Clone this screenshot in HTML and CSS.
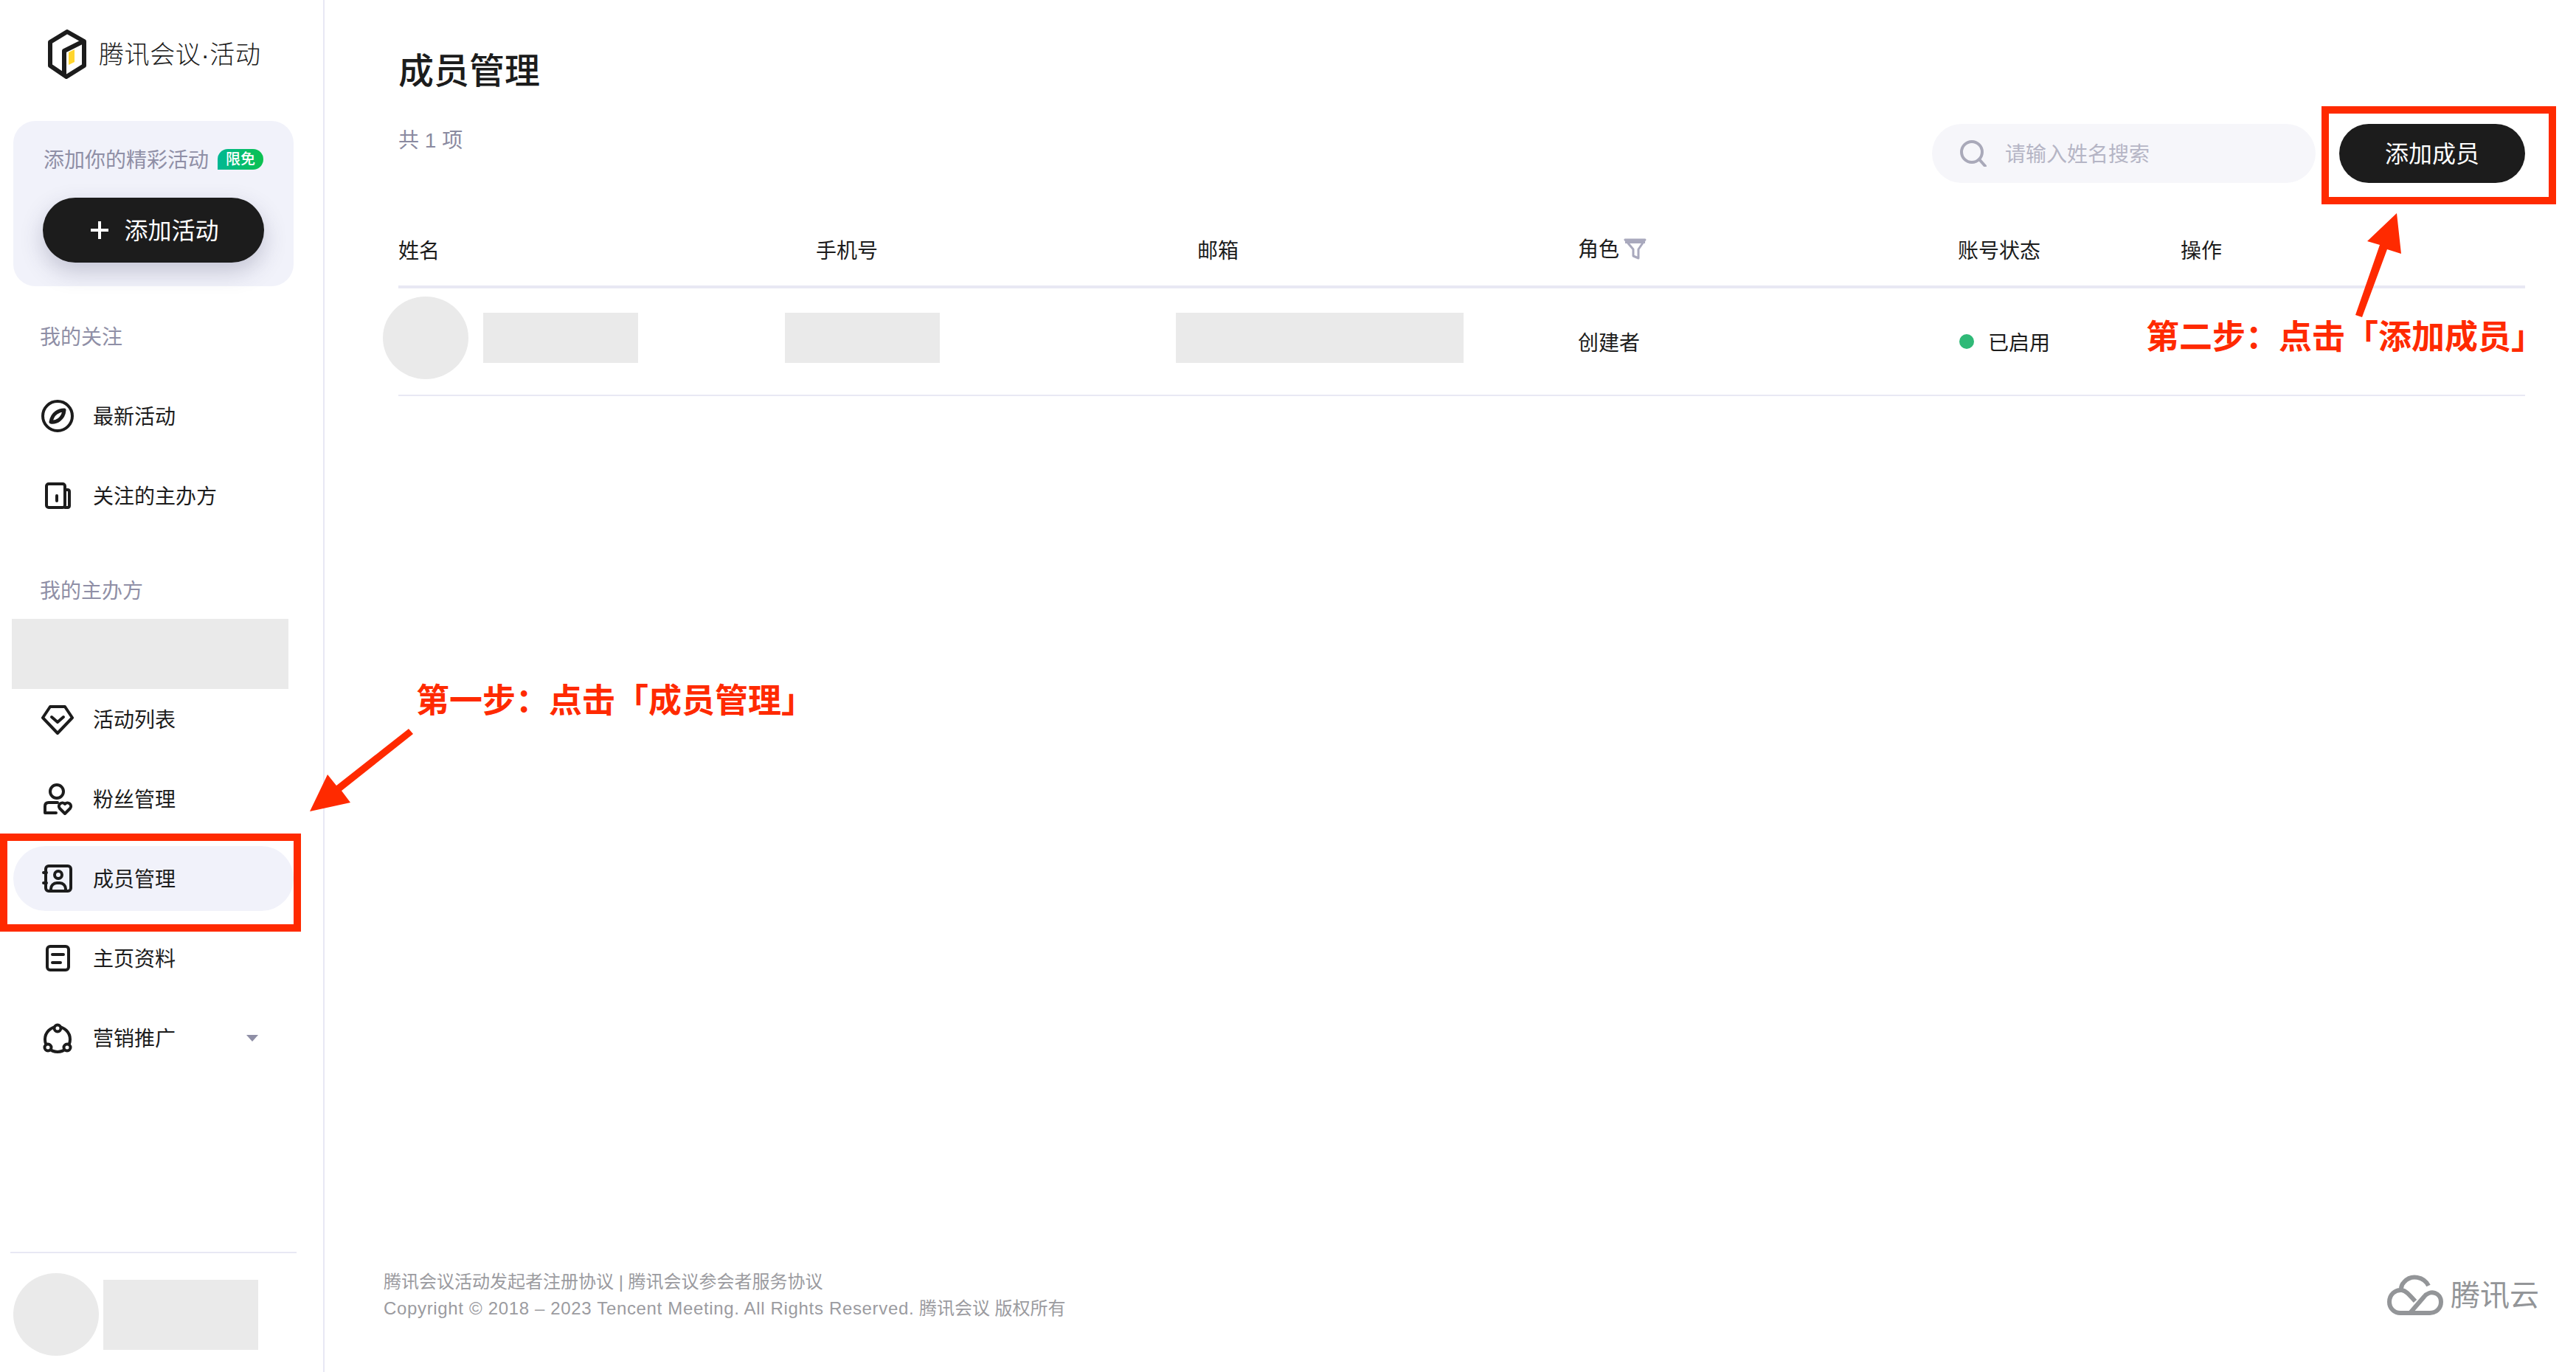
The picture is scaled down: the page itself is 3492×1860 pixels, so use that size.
FILE: index.html
```html
<!DOCTYPE html>
<html lang="zh-CN">
<head>
    <meta charset="UTF-8">
    <meta name="viewport" content="width=device-width, initial-scale=1.0">
    <title>成员管理</title>
    <link rel="stylesheet" href="styles.css">
</head>
<body>
    <div class="page">
        <aside class="sidebar">
            <div class="brand">
                <svg class="brand-logo" viewBox="0 0 52 68">
                    <path d="M26 3 L49 16 V49 L25 64 L3 49 V17 Z" fill="none" stroke="#1c1c1c" stroke-width="6" stroke-linejoin="round"/>
                    <path d="M48 16 L22 29 V61" fill="none" stroke="#1c1c1c" stroke-width="6" stroke-linejoin="round"/>
                    <path d="M28 31 L36 27 V44 L28 48 Z" fill="#ffd52e"/>
                </svg>
                <span class="brand-name">腾讯会议·活动</span>
            </div>

            <div class="promo-card">
                <div class="promo-title">
                    <span class="promo-text">添加你的精彩活动</span>
                    <span class="promo-badge">限免</span>
                </div>
                <button class="promo-button">
                    <svg class="plus-icon" viewBox="0 0 24 24">
                        <path d="M12 0 V24 M0 12 H24" stroke="#fff" stroke-width="4"/>
                    </svg>
                    <span>添加活动</span>
                </button>
            </div>

            <div class="nav-label nav-label-first">我的关注</div>
            <nav class="nav-list nav-list-first">
                <a class="nav-item">
                    <svg class="nav-icon" viewBox="0 0 44 44">
                        <circle cx="22" cy="22" r="20"/>
                        <path class="leaf" d="M31 14 C24 14 15 18 13 30 C20 31 30 26 31 14 Z"/>
                    </svg>
                    <span>最新活动</span>
                </a>
                <a class="nav-item">
                    <svg class="nav-icon" viewBox="0 0 44 44">
                        <rect x="7" y="6" width="25" height="32" rx="3"/>
                        <path d="M32 14 H36 A2.5 2.5 0 0 1 38 16.5 V35.5 A2.5 2.5 0 0 1 36 38 H32"/>
                        <path d="M21 22 V29"/>
                    </svg>
                    <span>关注的主办方</span>
                </a>
            </nav>

            <div class="nav-label nav-label-second">我的主办方</div>
            <div class="placeholder host-placeholder"></div>
            <nav class="nav-list nav-list-second">
                <a class="nav-item">
                    <svg class="nav-icon" viewBox="0 0 44 44">
                        <path d="M12 5 H32 L42 20 L22 41 L2 20 Z"/>
                        <path d="M14 19 L22 26 L30 19"/>
                    </svg>
                    <span>活动列表</span>
                </a>
                <a class="nav-item">
                    <svg class="nav-icon" viewBox="0 0 44 44">
                        <circle cx="21" cy="12" r="9"/>
                        <path d="M22 27 H10 Q5 27 5 32 V41 H20"/>
                        <path d="M32 42 L25 35 A4.6 4.6 0 0 1 32 29 A4.6 4.6 0 0 1 39 35 Z"/>
                    </svg>
                    <span>粉丝管理</span>
                </a>
                <a class="nav-item active">
                    <svg class="nav-icon" viewBox="0 0 44 44">
                        <rect x="6" y="5" width="34" height="34" rx="4"/>
                        <circle cx="23" cy="17" r="5"/>
                        <path d="M13 38 V36 A8 8 0 0 1 21 28 H25 A8 8 0 0 1 33 36 V38"/>
                        <path d="M3 14 H7 M3 28 H7"/>
                    </svg>
                    <span>成员管理</span>
                </a>
                <a class="nav-item">
                    <svg class="nav-icon" viewBox="0 0 44 44">
                        <rect x="8" y="6" width="29" height="32" rx="4"/>
                        <path d="M15 17 H30 M15 28 H26"/>
                    </svg>
                    <span>主页资料</span>
                </a>
                <a class="nav-item">
                    <svg class="nav-icon" viewBox="0 0 44 44">
                        <circle cx="22" cy="24" r="17"/>
                        <circle class="node" cx="22" cy="9" r="4.5"/>
                        <circle class="node" cx="9" cy="35" r="4.5"/>
                        <circle class="node" cx="35" cy="35" r="4.5"/>
                    </svg>
                    <span>营销推广</span>
                    <i class="nav-caret"></i>
                </a>
            </nav>

            <div class="user-box">
                <div class="placeholder avatar"></div>
                <div class="placeholder user-name"></div>
            </div>
        </aside>

        <main class="main">
            <h1 class="page-title">成员管理</h1>

            <div class="toolbar">
                <span class="total">共 1 项</span>
                <div class="toolbar-actions">
                    <div class="search-box">
                        <svg class="search-icon" viewBox="0 0 36 36">
                            <circle cx="16" cy="16" r="14" fill="none" stroke="#a9a9b9" stroke-width="4"/>
                            <path d="M26 26 L34 35" stroke="#a9a9b9" stroke-width="4" stroke-linecap="round"/>
                        </svg>
                        <span class="search-text">请输入姓名搜索</span>
                    </div>
                    <button class="add-button">添加成员</button>
                </div>
            </div>

            <div class="table-row table-head">
                <div class="head-cell">姓名</div>
                <div class="head-cell">手机号</div>
                <div class="head-cell">邮箱</div>
                <div class="role-head">
                    <span>角色</span>
                    <svg class="filter-icon" viewBox="0 0 31 29">
                        <path d="M2 2 H29 L20 15 V27 L13 24 V15 Z" fill="none" stroke="#a9a9bd" stroke-width="3" stroke-linejoin="round"/>
                        <path d="M2 4 H29" stroke="#a9a9bd" stroke-width="6"/>
                    </svg>
                </div>
                <div class="head-cell">账号状态</div>
                <div class="head-cell">操作</div>
            </div>
            <div class="table-row table-body">
                <div class="name-cell">
                    <div class="placeholder avatar"></div>
                    <div class="placeholder cell-block"></div>
                </div>
                <div class="placeholder cell-block phone-block"></div>
                <div class="placeholder email-block"></div>
                <div class="cell-text">创建者</div>
                <div class="cell-text status-cell"><i class="status-dot"></i>已启用</div>
                <div></div>
            </div>

            <footer class="footer">
                <div class="footer-text">
                    <div>腾讯会议活动发起者注册协议 | 腾讯会议参会者服务协议</div>
                    <div><span class="copyright">Copyright © 2018 – 2023 Tencent Meeting. All Rights Reserved.</span> 腾讯会议 版权所有</div>
                </div>
                <div class="cloud-logo">
                    <svg class="cloud-icon" viewBox="0 0 76 56">
                        <path d="M56 15 C50 3 33 -1 23 10 C19 14 19 17 19 19 M31 52 L50 30 C58 20 73 24 73 37 C73 46 66 52 58 52 H18 C9 52 3 45 3 37 C3 27 11 20 20 21 C25 22 28 25 38 36" fill="none" stroke="#939598" stroke-width="6"/>
                    </svg>
                    <span>腾讯云</span>
                </div>
            </footer>
        </main>

        <!-- 教程标注 -->
        <div class="mark-box mark-box-nav"></div>
        <div class="mark-box mark-box-add"></div>
        <div class="mark-text mark-text-one">第一步：点击「成员管理」</div>
        <div class="mark-text mark-text-two">第二步：点击「添加成员」</div>
        <svg class="mark-arrows" viewBox="0 0 3492 1860">
            <polygon points="554,988 456,1065 444,1050 420,1100 475,1088 463,1072 560,995"/>
            <polygon points="3193,427 3226,332 3209,327 3249,289 3255,344 3236,338 3202,430"/>
        </svg>
    </div>
</body>
</html>
```

FILE: styles.css
```css
* {
    box-sizing: border-box;
}

body {
    margin: 0;
    background-color: #fff;
    color: #1c1c1c;
    font-family: "Liberation Sans", "Noto Sans CJK SC", sans-serif;
    font-size: 28px;
    line-height: 40px;
}

.page {
    position: relative;
    display: flex;
    width: 3492px;
    height: 1860px;
    overflow: hidden;
}

.placeholder {
    background-color: #eaeaea;
}

.avatar {
    flex: none;
    width: 116px;
    height: 112px;
    border-radius: 50%;
}

/* 侧边栏 */
.sidebar {
    display: flex;
    flex: none;
    flex-direction: column;
    width: 440px;
    height: 1860px;
    padding-top: 41px;
    border-right: 2px solid #e8e8f4;
}

.brand {
    display: flex;
    align-items: center;
    gap: 17px;
    height: 66px;
    padding-left: 65px;
}

.brand-logo {
    width: 52px;
    height: 68px;
}

.brand-name {
    font-size: 34px;
    font-weight: 300;
    letter-spacing: 0.6px;
    white-space: nowrap;
}

.promo-card {
    width: 380px;
    height: 224px;
    margin: 57px 0 0 18px;
    padding: 32px 40px;
    border-radius: 30px;
    background-color: #f1f2fa;
}

.promo-title {
    display: flex;
    align-items: center;
    gap: 12px;
    height: 40px;
    padding-left: 1px;
    color: #8f8fa6;
    white-space: nowrap;
}

.promo-text {
    padding-top: 4px;
}

.promo-badge {
    width: 62px;
    height: 28px;
    border-radius: 14px 14px 14px 0;
    background: linear-gradient(90deg, #00b894, #0cc14f);
    color: #fff;
    font-size: 20px;
    font-weight: 500;
    line-height: 28px;
    text-align: center;
}

.promo-button {
    display: flex;
    align-items: center;
    justify-content: center;
    gap: 21px;
    width: 300px;
    height: 88px;
    margin-top: 32px;
    padding: 0 0 0 4px;
    border: none;
    border-radius: 44px;
    background-color: #1c1c1c;
    box-shadow: 0 12px 30px rgba(60, 60, 100, 0.25);
    color: #fff;
    font-family: inherit;
    font-size: 32px;
}

.promo-button span {
    padding-bottom: 4px;
}

.plus-icon {
    width: 24px;
    height: 24px;
}

.nav-label {
    padding: 2px 0 0 54px;
    color: #8f8fa6;
}

.nav-label-first {
    margin-top: 48px;
}

.nav-label-second {
    margin-top: 64px;
}

.nav-list {
    display: flex;
    flex-direction: column;
    gap: 20px;
}

.nav-list-first {
    margin-top: 42px;
}

.nav-list-second {
    margin-top: -3px;
}

.nav-item {
    display: flex;
    align-items: center;
    gap: 26px;
    width: 380px;
    height: 88px;
    margin-left: 18px;
    padding-left: 38px;
    border-radius: 44px;
}

.nav-item span {
    padding-top: 4px;
}

.nav-item.active {
    background-color: #f1f2fa;
}

.nav-icon {
    flex: none;
    width: 44px;
    height: 44px;
    fill: none;
    stroke: #1c1c1c;
    stroke-width: 4;
    stroke-linejoin: round;
    stroke-linecap: round;
}

.nav-icon .leaf {
    stroke-width: 5;
}

.nav-icon .node {
    fill: #fff;
}

.nav-caret {
    width: 0;
    height: 0;
    margin-left: 70px;
    border-top: 9px solid #8f8fa6;
    border-right: 8px solid transparent;
    border-left: 8px solid transparent;
}

.host-placeholder {
    width: 375px;
    height: 95px;
    margin: 17px 0 0 16px;
}

.user-box {
    display: flex;
    align-items: center;
    gap: 6px;
    width: 388px;
    height: 163px;
    margin: auto 0 0 14px;
    padding: 27px 0 22px 4px;
    border-top: 2px solid #e8e8f4;
}

.user-name {
    width: 210px;
    height: 95px;
}

/* 主内容 */
.main {
    display: flex;
    flex: 1;
    flex-direction: column;
    height: 1860px;
    padding: 65px 69px 0 100px;
}

.page-title {
    margin: 0;
    font-size: 48px;
    font-weight: 500;
    line-height: 64px;
}

.toolbar {
    display: flex;
    align-items: flex-start;
    justify-content: space-between;
    height: 80px;
    margin-top: 39px;
}

.total {
    margin-top: 3px;
    color: #8a8aa0;
}

.toolbar-actions {
    display: flex;
    gap: 32px;
}

.search-box {
    display: flex;
    align-items: center;
    gap: 25px;
    width: 520px;
    height: 80px;
    padding-left: 38px;
    border-radius: 40px;
    background-color: #f6f6fa;
}

.search-icon {
    width: 36px;
    height: 36px;
}

.search-text {
    padding-top: 4px;
    color: #b5b5c5;
}

.add-button {
    width: 252px;
    height: 80px;
    padding: 0 0 4px;
    border: none;
    border-radius: 40px;
    background-color: #1c1c1c;
    color: #fff;
    font-family: inherit;
    font-size: 32px;
}

.table-row {
    display: grid;
    grid-template-columns: 566px 517px 516px 515px 302px 1fr;
    align-items: center;
}

.table-head {
    height: 100px;
    margin-top: 43px;
    border-bottom: 4px solid #e8e8f4;
}

.head-cell {
    padding-top: 4px;
}

.role-head {
    display: flex;
    align-items: center;
    gap: 6px;
    margin-top: -4px;
}

.role-head span {
    padding-top: 4px;
}

.filter-icon {
    width: 31px;
    height: 29px;
}

.table-body {
    height: 146px;
    padding-bottom: 10px;
    border-bottom: 2px solid #e8e8f4;
}

.name-cell {
    display: flex;
    align-items: center;
    gap: 20px;
    margin-left: -21px;
}

.cell-block {
    width: 210px;
    height: 68px;
}

.phone-block {
    margin-left: -42px;
}

.email-block {
    width: 390px;
    height: 68px;
    margin-left: -29px;
}

.cell-text {
    margin-top: 16px;
}

.status-cell {
    display: flex;
    align-items: center;
    gap: 19px;
}

.status-dot {
    width: 20px;
    height: 20px;
    margin: -6px 0 0 2px;
    border-radius: 50%;
    background-color: #2fb977;
}

.footer {
    display: flex;
    align-items: center;
    justify-content: space-between;
    margin: auto -19px 68px -20px;
}

.footer-text {
    color: #9b9ba0;
    font-size: 24px;
    line-height: 36px;
}

.copyright {
    letter-spacing: 0.66px;
}

.cloud-logo {
    display: flex;
    align-items: center;
    gap: 10px;
    color: #939598;
    font-size: 40px;
}

.cloud-icon {
    width: 76px;
    height: 56px;
}

/* 教程标注 */
.mark-box {
    position: absolute;
    border: 10px solid #ff2a00;
}

.mark-box-nav {
    top: 1130px;
    left: 0;
    width: 408px;
    height: 133px;
}

.mark-box-add {
    top: 144px;
    left: 3147px;
    width: 318px;
    height: 133px;
}

.mark-text {
    position: absolute;
    color: #ff2a00;
    font-family: "Noto Sans CJK SC", sans-serif;
    font-size: 45px;
    font-weight: 700;
    line-height: 60px;
    white-space: nowrap;
}

.mark-text-one {
    top: 917px;
    left: 564px;
}

.mark-text-two {
    top: 424px;
    left: 2909px;
}

.mark-arrows {
    position: absolute;
    top: 0;
    left: 0;
    width: 3492px;
    height: 1860px;
    fill: #ff2a00;
    pointer-events: none;
}
```
